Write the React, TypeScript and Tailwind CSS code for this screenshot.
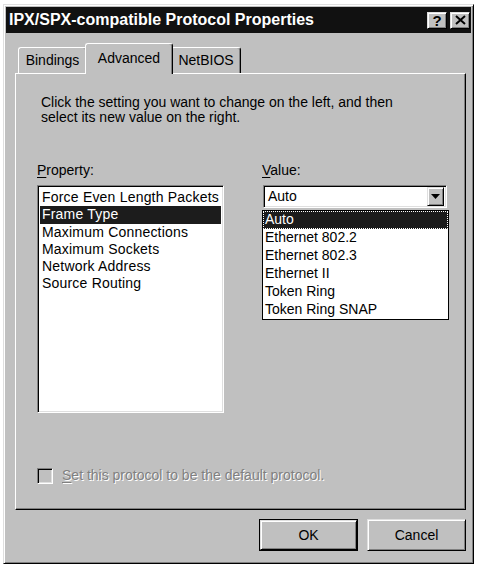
import React from "react";

const raised =
  "border border-t-[#dfdfdf] border-l-[#dfdfdf] border-r-black border-b-black shadow-[inset_1px_1px_0_#fff,inset_-1px_-1px_0_#808080]";
const sunken =
  "border border-t-[#808080] border-l-[#808080] border-r-white border-b-white shadow-[inset_1px_1px_0_#000,inset_-1px_-1px_0_#dfdfdf]";

const properties = [
  "Force Even Length Packets",
  "Frame Type",
  "Maximum Connections",
  "Maximum Sockets",
  "Network Address",
  "Source Routing",
];

const values = [
  "Auto",
  "Ethernet 802.2",
  "Ethernet 802.3",
  "Ethernet II",
  "Token Ring",
  "Token Ring SNAP",
];

function TitleButton({ children }: { children: React.ReactNode }) {
  return (
    <div
      className={`w-[20px] h-[17px] bg-[#c0c0c0] flex items-center justify-center text-black font-bold text-[15px] leading-none ${raised}`}
    >
      {children}
    </div>
  );
}

function Tab({ label, width, active }: { label: string; width: string; active?: boolean }) {
  if (active) {
    return (
      <div
        className={`relative z-10 -mx-[2px] -mb-[1px] h-[31px] ${width} flex justify-center pt-[6px] bg-[#c0c0c0] border-t border-l border-t-white border-l-white border-r border-r-black rounded-t-[3px] shadow-[inset_-1px_0_0_#808080]`}
      >
        {label}
      </div>
    );
  }
  return (
    <div
      className={`h-[26px] ${width} flex justify-center pt-[4px] bg-[#c0c0c0] border-t border-l border-t-white border-l-white border-r border-r-black rounded-t-[3px] shadow-[inset_-1px_0_0_#808080]`}
    >
      {label}
    </div>
  );
}

export default function App() {
  return (
    <div
      className="w-[481px] h-[567px] bg-white pt-[4px] pl-[3px]"
      style={{ fontFamily: '"Liberation Sans", Arial, sans-serif' }}
    >
      <div className={`w-[471px] h-[560px] bg-[#c0c0c0] pt-[2px] pl-[2px] pr-[2px] flex flex-col ${raised}`}>
        {/* Title bar */}
        <div className="h-[26px] bg-[#111] flex items-center justify-between pl-[3px] pr-[1px]">
          <span className="text-white font-bold text-[16px] leading-none">
            IPX/SPX-compatible Protocol Properties
          </span>
          <div className="flex gap-[3px]">
            <TitleButton>?</TitleButton>
            <TitleButton>
              <svg width="11" height="10" viewBox="0 0 11 10">
                <path d="M1 1 L10 9 M10 1 L1 9" stroke="#000" strokeWidth="2" />
              </svg>
            </TitleButton>
          </div>
        </div>

        {/* Tabs */}
        <div className="flex items-end h-[30px] mt-[10px] pl-[12px] text-black text-[14px] leading-[16px]">
          <Tab label="Bindings" width="w-[69px]" />
          <Tab label="Advanced" width="w-[88px]" active />
          <Tab label="NetBIOS" width="w-[70px]" />
        </div>

        {/* Panel */}
        <div className="ml-[9px] w-[451px] h-[437px] border border-t-white border-l-white border-r-black border-b-black shadow-[inset_-1px_-1px_0_#808080] pl-[21px] text-black text-[14px] flex flex-col">
          <p className="mt-[21px] ml-[4px] leading-[15px] w-[390px]">
            Click the setting you want to change on the left, and then select
            its new value on the right.
          </p>

          <div className="flex mt-[37px]">
            <div className="flex flex-col">
              <span className="leading-[16px]">
                <span className="underline underline-offset-2">P</span>roperty:
              </span>
              <div className={`mt-[7px] w-[187px] h-[228px] bg-white p-[2px] pt-[3px] ${sunken}`}>
                {properties.map((p, i) => (
                  <div
                    key={p}
                    className={`h-[17.3px] leading-[17px] pl-[2px] whitespace-nowrap tracking-[0.2px] ${
                      i === 1 ? "bg-[#1c1c1c] text-white" : ""
                    }`}
                  >
                    {p}
                  </div>
                ))}
              </div>
            </div>

            <div className="flex flex-col ml-[38px]">
              <span className="leading-[16px]">
                <span className="underline underline-offset-2">V</span>alue:
              </span>
              <div className={`mt-[7px] ml-[1px] w-[184px] h-[23px] bg-white flex items-center justify-between pl-[4px] pr-[2px] ${sunken}`}>
                <span>Auto</span>
                <div className={`w-[17px] h-[19px] bg-[#c0c0c0] flex items-center justify-center ${raised}`}>
                  <svg width="9" height="5" viewBox="0 0 9 5">
                    <path d="M0 0 H9 L4.5 5 Z" fill="#000" />
                  </svg>
                </div>
              </div>
              <div className="mt-[2px] w-[187px] bg-white border border-black">
                {values.map((v, i) => (
                  <div
                    key={v}
                    className={`h-[18px] leading-[17px] pl-[2px] whitespace-nowrap ${
                      i === 0
                        ? "bg-[#1c1c1c] text-white outline-1 outline-dotted outline-white -outline-offset-1"
                        : ""
                    }`}
                  >
                    {v}
                  </div>
                ))}
              </div>
            </div>
          </div>

          <div className="mt-auto mb-[23px] flex items-center">
            <div className={`w-[16px] h-[16px] bg-[#c0c0c0] ${sunken}`} />
            <span className="ml-[9px] text-[#808080] [text-shadow:1px_1px_0_#fff]">
              <span className="underline underline-offset-2">S</span>et this protocol to be the default protocol.
            </span>
          </div>
        </div>

        {/* Buttons */}
        <div className="flex gap-[9px] pl-[253px] mt-[9px]">
          <div className="border border-black">
            <div className={`w-[97px] h-[30px] bg-[#c0c0c0] flex items-center justify-center text-[14px] text-black ${raised}`}>
              OK
            </div>
          </div>
          <div className={`w-[99px] h-[32px] bg-[#c0c0c0] flex items-center justify-center text-[14px] text-black ${raised}`}>
            Cancel
          </div>
        </div>
      </div>
    </div>
  );
}
